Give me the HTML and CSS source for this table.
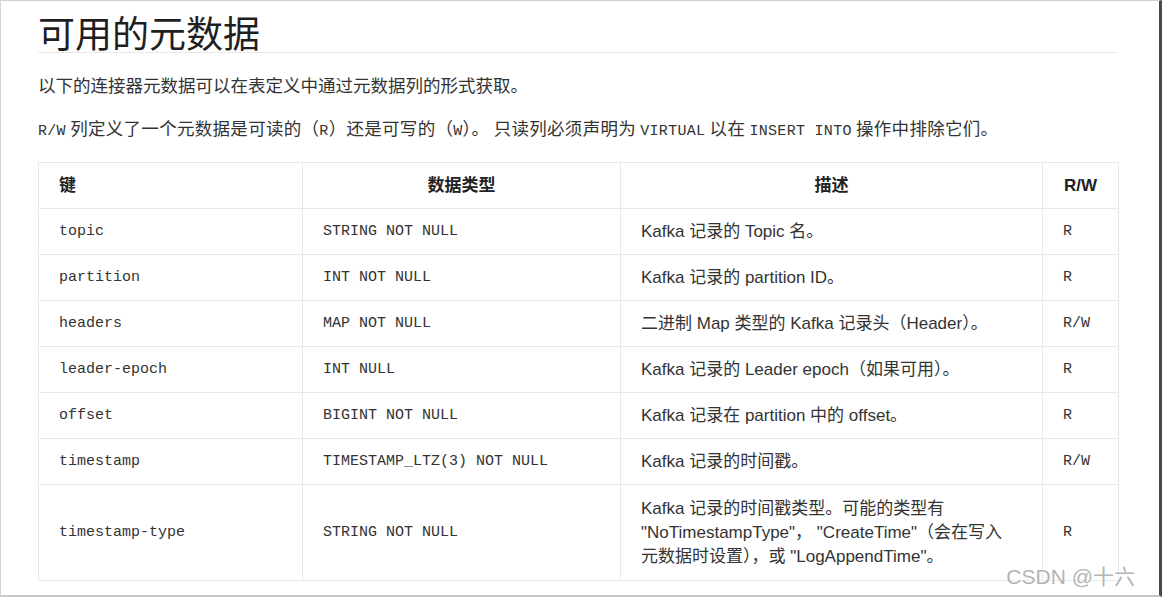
FILE: index.html
```html
<!DOCTYPE html>
<html lang="zh-CN">
<head>
<meta charset="utf-8">
<title>可用的元数据</title>
<link rel="stylesheet" href="styles.css">
</head>
<body>
<div class="frame">
  <div class="content">
    <h1 class="title">可用的元数据</h1>
    <p class="para first">以下的连接器元数据可以在表定义中通过元数据列的形式获取。</p>
    <p class="para second"><code class="ic">R/W</code> 列定义了一个元数据是可读的（<code class="ic">R</code>）还是可写的（<code class="ic">W</code>）。 只读列必须声明为 <code class="ic">VIRTUAL</code> 以在 <code class="ic">INSERT INTO</code> 操作中排除它们。</p>
    <table class="meta">
      <colgroup>
        <col class="c-key"><col class="c-type"><col class="c-desc"><col class="c-rw">
      </colgroup>
      <thead>
        <tr><th class="left">键</th><th>数据类型</th><th>描述</th><th>R/W</th></tr>
      </thead>
      <tbody>
        <tr><td class="mono">topic</td><td class="mono">STRING NOT NULL</td><td>Kafka 记录的 Topic 名。</td><td class="mono">R</td></tr>
        <tr><td class="mono">partition</td><td class="mono">INT NOT NULL</td><td>Kafka 记录的 partition ID。</td><td class="mono">R</td></tr>
        <tr><td class="mono">headers</td><td class="mono">MAP NOT NULL</td><td>二进制 Map 类型的 Kafka 记录头（Header）。</td><td class="mono">R/W</td></tr>
        <tr><td class="mono">leader-epoch</td><td class="mono">INT NULL</td><td>Kafka 记录的 Leader epoch（如果可用）。</td><td class="mono">R</td></tr>
        <tr><td class="mono">offset</td><td class="mono">BIGINT NOT NULL</td><td>Kafka 记录在 partition 中的 offset。</td><td class="mono">R</td></tr>
        <tr><td class="mono">timestamp</td><td class="mono">TIMESTAMP_LTZ(3) NOT NULL</td><td>Kafka 记录的时间戳。</td><td class="mono">R/W</td></tr>
        <tr class="tall"><td class="mono">timestamp-type</td><td class="mono">STRING NOT NULL</td><td>Kafka 记录的时间戳类型。可能的类型有<br>"NoTimestampType"， "CreateTime"（会在写入<br>元数据时设置），或 "LogAppendTime"。</td><td class="mono">R</td></tr>
      </tbody>
    </table>
  </div>
  <div class="watermark">CSDN @十六</div>
</div>
</body>
</html>
```

FILE: styles.css
```css
html, body {
  margin: 0;
  padding: 0;
  background: #ffffff;
}

.frame {
  position: relative;
  width: 1162px;
  height: 597px;
  box-sizing: border-box;
  border-top: 1px solid #cfcfcf;
  border-left: 1px solid #d6d6d6;
  border-right: 3px solid #4a4a4a;
  border-bottom: 2px solid #c8c8c8;
  overflow: hidden;
  font-family: "Liberation Sans", "Noto Sans CJK SC", sans-serif;
  color: #333333;
}

.content {
  padding-left: 37px;
  width: 1080px;
}

.title {
  margin: 11px 0 0 0;
  padding: 0;
  font-family: "Noto Sans CJK SC", sans-serif;
  font-weight: 400;
  font-size: 37px;
  line-height: 40px;
  color: #1f1f1f;
  border-bottom: 1px solid #e8e8e8;
}

.para {
  margin: 0;
  font-family: "Noto Sans CJK SC", "Liberation Sans", sans-serif;
  font-size: 17.5px;
  line-height: 26px;
  color: #333333;
}

.para.first {
  margin-top: 19px;
}

.para.second {
  margin-top: 17px;
  letter-spacing: 0.3px;
}

.ic {
  font-family: "Liberation Mono", monospace;
  font-size: 15px;
  color: #333333;
}

.meta {
  margin-top: 17px;
  width: 1080px;
  table-layout: fixed;
  border-collapse: collapse;
  border: 1px solid #e6eaef;
}

.c-key { width: 264px; }
.c-type { width: 318px; }
.c-desc { width: 422px; }
.c-rw { width: 76px; }

.meta th,
.meta td {
  border: 1px solid #e6eaef;
  padding: 10.5px 20px;
  line-height: 24px;
  vertical-align: middle;
  text-align: left;
}

.meta th {
  font-family: "Liberation Sans", "Noto Sans CJK SC", sans-serif;
  font-weight: 700;
  font-size: 17px;
  color: #222222;
  text-align: center;
}

.meta th.left {
  text-align: left;
}

.meta td {
  font-size: 17px;
  color: #333333;
}

.meta td.mono {
  font-family: "Liberation Mono", monospace;
  font-size: 15px;
  color: #333333;
}

.meta tr.tall td {
  padding-top: 11.5px;
  padding-bottom: 11.5px;
}

.watermark {
  position: absolute;
  right: 24px;
  bottom: 5px;
  font-family: "Liberation Sans", "Noto Sans CJK SC", sans-serif;
  font-size: 21px;
  color: #b4b4b4;
  text-shadow: 0 0 2px #ffffff;
}
```
